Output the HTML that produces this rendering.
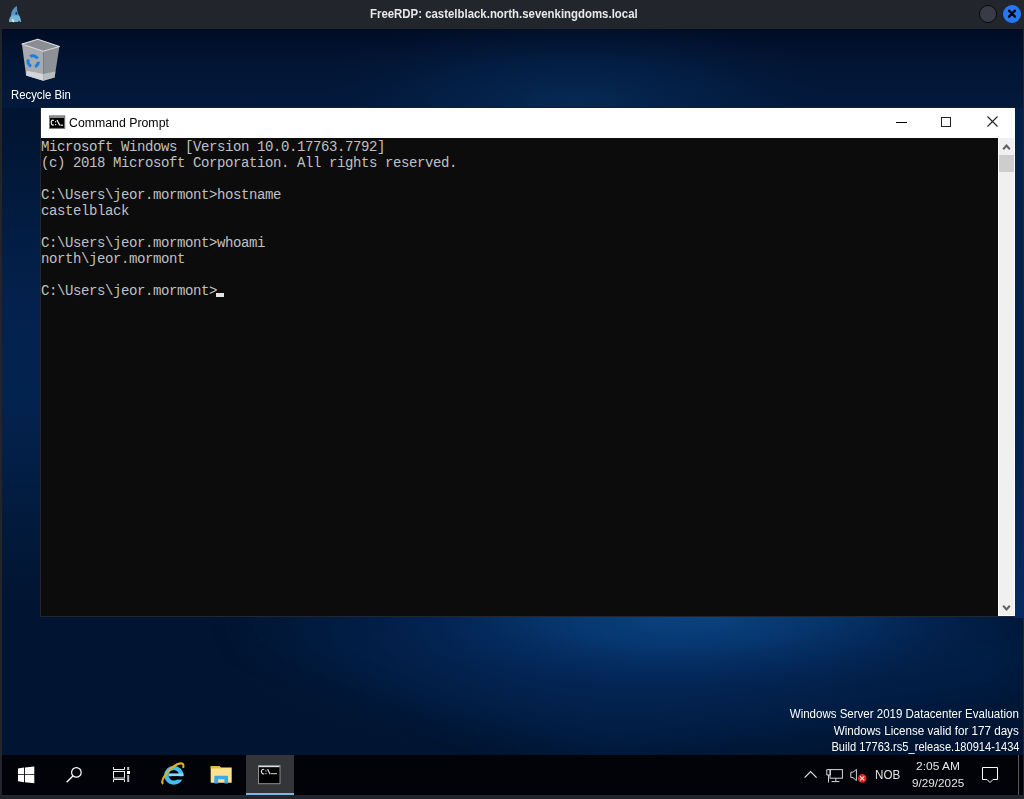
<!DOCTYPE html>
<html><head><meta charset="utf-8">
<style>
*{margin:0;padding:0;box-sizing:border-box}
html,body{width:1024px;height:799px;overflow:hidden;background:#23252d;font-family:"Liberation Sans",sans-serif}
.abs{position:absolute}
#title{position:absolute;left:0;top:0;width:1024px;height:29px;background:#23252d}
#title .t{position:absolute;left:369.5px;top:7px;color:#e8e8e8;font-weight:bold;font-size:12.5px;white-space:nowrap;transform:scaleX(0.913);transform-origin:0 0}
#desk{position:absolute;left:2px;top:29px;width:1021px;height:766px;overflow:hidden;
background:#010d27}
#wall{position:absolute;left:0;top:0;width:1021px;height:766px}
#win{position:absolute;left:40px;top:107px;width:975px;height:510px;background:#fff;border:1px solid #22262e;border-top-color:#1a1e28;border-right:0}
#wtitle{position:absolute;left:0;top:0;width:974px;height:30px;background:#fff}
#wtitle .t{position:absolute;left:28.4px;top:8px;font-size:12px;color:#000;white-space:nowrap;transform:scaleX(1.026);transform-origin:0 0}
#con{position:absolute;left:0;top:30px;width:957px;height:478px;background:#0c0c0c;color:#c0c0c0;font-family:"Liberation Mono",monospace;font-size:14px;letter-spacing:-0.4px;line-height:16px;white-space:pre;padding-top:1px}
#sb{position:absolute;left:957px;top:30px;width:17px;height:478px;background:#f0f0f0;border:1px solid #fff;border-top:0}
#thumb{position:absolute;left:0;top:17px;width:15px;height:17px;background:#cdcdcd}
#task{position:absolute;left:2px;top:755px;width:1021px;height:40px;background:#020308}
.tt{color:#e6e6e6;white-space:nowrap}
.wm{position:absolute;color:#fff;font-size:12px;text-align:right;right:5px;white-space:nowrap;transform-origin:100% 0}
</style></head><body>
<div id="title">
  <svg class="abs" style="left:8px;top:5px" width="14" height="18" viewBox="0 0 14 18">
    <defs><linearGradient id="fr" x1="0" y1="0" x2="0" y2="18" gradientUnits="userSpaceOnUse"><stop offset="0" stop-color="#4f8ec0"/><stop offset="0.55" stop-color="#5a98c6"/><stop offset="0.62" stop-color="#76b4d6"/><stop offset="1" stop-color="#78b6d8"/></linearGradient></defs>
    <path d="M9 1 C5 3 3 7 3 11 C1 13 1 16 1 17 L13 17 C13 14 12 11 10 9 C9 6 9 3 9 1Z" fill="url(#fr)"/>
    <ellipse cx="8.3" cy="8.4" rx="0.9" ry="1.3" fill="#0a3a70"/>
    <path d="M5.2 14.2C4.4 15 4.6 16.6 6.2 16.6" fill="none" stroke="#f0f4f4" stroke-width="1.3"/>
    <ellipse cx="11" cy="16.4" rx="1" ry="0.6" fill="#1e4e88"/>
  </svg>
  <div class="t m">FreeRDP: castelblack.north.sevenkingdoms.local</div>
  <div class="abs" style="left:979px;top:5px;width:18px;height:18px;border-radius:50%;background:#393b48;border:1px solid #0a0a0a"></div>
  <div class="abs" style="left:1003px;top:5px;width:18px;height:18px;border-radius:50%;background:#2677f2"></div>
  <svg class="abs" style="left:1003px;top:5px" width="18" height="18" viewBox="0 0 18 18"><path d="M6 5.6L12 11.6M12 5.6L6 11.6" stroke="#000" stroke-width="2.2" stroke-linecap="round"/></svg>
</div>
<div id="desk">
  <svg id="wall" width="1021" height="766" viewBox="2 29 1021 766">
    <defs>
      <linearGradient id="base" x1="0" y1="29" x2="0" y2="795" gradientUnits="userSpaceOnUse">
        <stop offset="0" stop-color="#010c24"/>
        <stop offset="0.04" stop-color="#021432"/>
        <stop offset="0.1" stop-color="#03193c"/>
        <stop offset="0.4" stop-color="#021836"/>
        <stop offset="0.8" stop-color="#011532"/>
        <stop offset="1" stop-color="#011532"/>
      </linearGradient>
      <radialGradient id="g0" cx="640" cy="640" r="420" gradientUnits="userSpaceOnUse" gradientTransform="translate(640 640) scale(1 0.3) translate(-640 -640)">
        <stop offset="0" stop-color="#052d64"/>
        <stop offset="0.6" stop-color="#03224e" stop-opacity="0.6"/>
        <stop offset="1" stop-color="#021a3c" stop-opacity="0"/>
      </radialGradient>
      <radialGradient id="g1" cx="690" cy="612" r="320" gradientUnits="userSpaceOnUse" gradientTransform="translate(690 612) scale(1 0.25) translate(-690 -612)">
        <stop offset="0" stop-color="#0b4684"/>
        <stop offset="0.45" stop-color="#073a74" stop-opacity="0.75"/>
        <stop offset="1" stop-color="#04275a" stop-opacity="0"/>
      </radialGradient>
      <radialGradient id="g2" cx="575" cy="100" r="280" gradientUnits="userSpaceOnUse" gradientTransform="translate(575 100) scale(1 0.3) translate(-575 -100)">
        <stop offset="0" stop-color="#052a55"/>
        <stop offset="0.5" stop-color="#04224a" stop-opacity="0.6"/>
        <stop offset="1" stop-color="#03183a" stop-opacity="0"/>
      </radialGradient>
      <linearGradient id="ls" x1="0" y1="108" x2="0" y2="618" gradientUnits="userSpaceOnUse">
        <stop offset="0" stop-color="#011430"/>
        <stop offset="0.37" stop-color="#03214c"/>
        <stop offset="0.57" stop-color="#03234f"/>
        <stop offset="0.81" stop-color="#021a3c"/>
        <stop offset="1" stop-color="#011430"/>
      </linearGradient>
      <linearGradient id="rs" x1="0" y1="108" x2="0" y2="618" gradientUnits="userSpaceOnUse">
        <stop offset="0" stop-color="#031f48"/>
        <stop offset="0.6" stop-color="#03234f"/>
        <stop offset="1" stop-color="#042a60"/>
      </linearGradient>
      <filter id="bl" x="-20%" y="-50%" width="140%" height="200%"><feGaussianBlur stdDeviation="25"/></filter>
    </defs>
    <rect x="2" y="29" width="1021" height="766" fill="url(#base)"/>
    <path d="M240 612L1023 612L1023 690L600 750Z" fill="#042858" opacity="0.55" filter="url(#bl)"/>
    <rect x="2" y="29" width="1021" height="766" fill="url(#g0)"/>
    <rect x="2" y="29" width="1021" height="766" fill="url(#g1)"/>
    <rect x="2" y="29" width="1021" height="766" fill="url(#g2)"/>
    <rect x="2" y="108" width="40" height="510" fill="url(#ls)"/>
    <rect x="1014" y="108" width="9" height="510" fill="url(#rs)"/>
  </svg>
</div>
  <!-- recycle bin -->
  <svg class="abs" style="left:0;top:0" width="80" height="90" viewBox="0 0 80 90">
    <path d="M21.9 44.1L43.2 51.3L43.2 80.7L26.1 75.6Z" fill="#a7abb0"/>
    <path d="M43.2 51.3L59.4 46.5L54.6 77.4L43.2 80.7Z" fill="#8e9297"/>
    <path d="M26.8 70.8L43.2 74L43.2 80.7L26.1 75.6Z" fill="#d3d6d9"/>
    <path d="M43.2 74L55.4 71.5L54.6 77.4L43.2 80.7Z" fill="#b9bcbf"/>
    <path d="M21.9 44.1L37.8 39.3L59.4 46.5L43.2 51.3Z" fill="#8a8e93" stroke="#d8dce0" stroke-width="1.1" stroke-linejoin="round"/>
    <g fill="none" stroke="#1a7fe0" stroke-width="3">
      <path d="M30.2 56.6A5.3 5.3 0 0 1 37.6 58.4"/>
      <path d="M38.4 61.8A5.3 5.3 0 0 1 35 66.6"/>
      <path d="M31.2 66.3A5.3 5.3 0 0 1 28.4 59.5"/>
    </g>
  </svg>
  <div class="abs" style="left:10.9px;top:88px;color:#fff;font-size:12px;white-space:nowrap;transform:scaleX(0.945);transform-origin:0 0"><span class="m">Recycle Bin</span></div>

  <div id="win">
    <div id="wtitle">
      <svg class="abs" style="left:8px;top:7px" width="17" height="14" viewBox="49 115 17 14">
        <rect x="49.5" y="115.9" width="15.2" height="12.5" fill="#000" stroke="#7a7a7a" stroke-width="1"/>
        <rect x="50" y="116.4" width="14.2" height="1.3" fill="#c4c4c4"/>
        <path d="M53.8 120.6C53.2 119.9 51.2 119.9 51.2 122.6C51.2 125.3 53.2 125.3 53.8 124.6" fill="none" stroke="#f0f0f0" stroke-width="1.2"/>
        <rect x="55" y="121.2" width="1.2" height="1.2" fill="#e8e8e8"/>
        <rect x="55" y="124" width="1.2" height="1.2" fill="#e8e8e8"/>
        <path d="M57 120L59.8 125.4" stroke="#f0f0f0" stroke-width="1.2"/>
        <rect x="60.4" y="124.6" width="2.6" height="1.2" fill="#e8e8e8"/>
      </svg>
      <div class="t m">Command Prompt</div>
      <div class="abs" style="left:855px;top:14px;width:11px;height:1px;background:#000"></div>
      <div class="abs" style="left:900px;top:9px;width:10px;height:10px;border:1px solid #222"></div>
      <svg class="abs" style="left:946px;top:8px" width="11" height="11" viewBox="0 0 11 11"><path d="M0.5 0.5L10.5 10.5M10.5 0.5L0.5 10.5" stroke="#222" stroke-width="1.1"/></svg>
    </div>
    <div id="con">Microsoft Windows [Version 10.0.17763.7792]
(c) 2018 Microsoft Corporation. All rights reserved.

C:\Users\jeor.mormont&gt;hostname
castelblack

C:\Users\jeor.mormont&gt;whoami
north\jeor.mormont

C:\Users\jeor.mormont&gt;<span style="display:inline-block;width:8px;height:4px;margin-left:-1px;background:#e4e4e4;vertical-align:-2px"></span></div>
    <div id="sb">
      <svg class="abs" style="left:3px;top:4px" width="9" height="9" viewBox="0 0 9 9"><path d="M1.2 7.2L4.5 3.6L7.8 7.2" stroke="#606060" stroke-width="2" fill="none"/></svg>
      <div id="thumb"></div>
      <svg class="abs" style="left:3px;top:466px" width="9" height="9" viewBox="0 0 9 9"><path d="M1.2 1.8L4.5 5.4L7.8 1.8" stroke="#606060" stroke-width="2" fill="none"/></svg>
    </div>
  </div>

  <div class="wm m" style="top:707px;transform:scaleX(0.959)">Windows Server 2019 Datacenter Evaluation</div>
  <div class="wm m" style="top:724px;transform:scaleX(0.97)">Windows License valid for 177 days</div>
  <div class="wm m" style="top:740px;transform:scaleX(0.924)">Build 17763.rs5_release.180914-1434</div>

  <div id="task">
    <svg class="abs" style="left:-2px;top:0;overflow:visible" width="1024" height="40" viewBox="0 755 1024 40">
      <g fill="#ffffff">
        <path d="M18 768.4L24 767.6L24 774.2L18 774.2Z"/>
        <path d="M24.9 767.5L34.3 766.4L34.3 774.2L24.9 774.2Z"/>
        <path d="M18 775.1L24 775.1L24 782.2L18 781.2Z"/>
        <path d="M24.9 775.1L34.3 775.1L34.3 783.3L24.9 782.3Z"/>
      </g>
      <g fill="none" stroke="#ffffff" stroke-width="1.2">
        <circle cx="76.4" cy="772.4" r="4.8"/>
        <path d="M66.6 782.3L72.9 776" stroke-width="1.4"/>
      </g>
      <g fill="none" stroke="#f0f0f0" stroke-width="1">
        <path d="M113.5 767V769.5H124.5V767"/>
        <rect x="113.5" y="771.5" width="11" height="6.5"/>
        <path d="M113.5 782V779.5H124.5V782"/>
      </g>
      <rect x="127.2" y="767" width="2" height="3" fill="#c8c8c8"/>
      <rect x="127" y="771" width="3" height="3" fill="#ffffff"/>
      <rect x="127.2" y="775" width="2" height="7" fill="#b8c0c8"/>
      <!-- IE -->
      <g>
        <circle cx="173.8" cy="775.3" r="7.4" fill="none" stroke="#45bcef" stroke-width="4.3"/>
        <rect x="168.5" y="773.4" width="15" height="2.9" fill="#86d8f7"/>
        <rect x="171.5" y="776.3" width="14" height="3.3" fill="#020308"/>
        <path d="M163.1 783.9A14 5.2 -45 1 1 183.1 767.9" fill="none" stroke="#e8b010" stroke-width="2.1"/>
      </g>
      <!-- folder -->
      <path d="M210.7 766.2H219.5L221 767.4H231.7V782.8H210.7Z" fill="#fde18c"/>
      <path d="M210.7 766.2H219.5L221 768.6H210.7Z" fill="#e6be3a"/>
      <path d="M214.3 783.6V777C214.3 776.3 214.8 775.8 215.5 775.8H227C227.6 775.8 228.1 776.3 228.1 777V783.6H224.4V779.3H218.2V783.6Z" fill="#3aa9ea"/>
      <!-- active cmd button -->
      <rect x="246" y="755" width="48" height="40" fill="#343538"/>
      <rect x="246" y="793" width="48" height="2" fill="#76b9ed"/>
      <rect x="258.5" y="765.5" width="21.5" height="18.2" fill="#000" stroke="#8e8e8e" stroke-width="1"/>
      <rect x="259" y="766" width="20.5" height="1.2" fill="#d4dce4"/>
      <path d="M264.2 769.6C263.6 769 261.4 769 261.4 771.6C261.4 774.2 263.6 774.2 264.2 773.6" fill="none" stroke="#e8e8e8" stroke-width="1.1"/>
      <rect x="265.4" y="770.4" width="1.1" height="1.1" fill="#e0e0e0"/>
      <rect x="265.4" y="773" width="1.1" height="1.1" fill="#e0e0e0"/>
      <path d="M267.6 769.2L270.2 774.2" stroke="#e8e8e8" stroke-width="1.1"/>
      <rect x="271" y="773.2" width="6" height="1" fill="#d8d8d8"/>
      <!-- tray -->
      <path d="M804.6 777.6L810.6 771.6L816.6 777.6" fill="none" stroke="#e0e0e0" stroke-width="1.2"/>
      <g fill="none" stroke="#d8d8d8" stroke-width="1">
        <rect x="830" y="769.6" width="12.4" height="8.6"/>
        <path d="M835.8 778.2V781.3M831.6 781.6H839.4"/>
        <path d="M828.5 775V782.5M826.8 769.6H830.4V775H826.8Z"/>
      </g>
      <path d="M850.8 772.2H853L856.4 769.4V780.6L853 777.6H850.8Z" fill="none" stroke="#d8d8d8" stroke-width="1"/>
      <circle cx="862.2" cy="778.4" r="4.3" fill="#e0242a"/>
      <path d="M860.2 776.4L864.2 780.4M864.2 776.4L860.2 780.4" stroke="#f4ecd0" stroke-width="1.2"/>
      <path d="M982.5 767.5H997.5V779.5H993L990 782.5L987 779.5H982.5Z" fill="none" stroke="#ffffff" stroke-width="1"/>
      <rect x="1018" y="755" width="1" height="40" fill="#5a5a5a"/>
    </svg>
    <div class="abs tt m" style="left:873px;top:12.5px;font-size:12.5px;transform:scaleX(0.93);transform-origin:0 0">NOB</div>
    <div class="abs tt m" style="left:914.4px;top:4.5px;font-size:11.5px;transform:scaleX(1.04);transform-origin:0 0">2:05 AM</div>
    <div class="abs tt m" style="left:910.2px;top:22px;font-size:11.5px;transform:scaleX(1.02);transform-origin:0 0">9/29/2025</div>
  </div>
</body></html>
